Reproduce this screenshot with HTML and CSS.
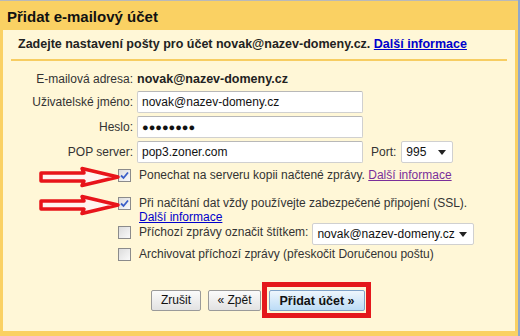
FILE: index.html
```html
<!DOCTYPE html>
<html lang="cs">

<head>
    <meta charset="UTF-8">
    <title>Přidat e-mailový účet</title>
    <link rel="stylesheet" href="styles.css">
</head>

<body>
    <div class="window">
        <div class="panel">
            <h1 class="title">Přidat e-mailový účet</h1>
            <div class="content">
                <p class="intro">Zadejte nastavení pošty pro účet novak@nazev-domeny.cz. <a href="#">Další informace</a></p>

                <div class="form">
                    <div class="row">
                        <span class="label">E-mailová adresa:</span>
                        <b class="address">novak@nazev-domeny.cz</b>
                    </div>
                    <div class="row">
                        <span class="label">Uživatelské jméno:</span>
                        <span class="input">novak@nazev-domeny.cz</span>
                    </div>
                    <div class="row">
                        <span class="label">Heslo:</span>
                        <span class="input dots">●●●●●●●●</span>
                    </div>
                    <div class="row">
                        <span class="label">POP server:</span>
                        <span class="input">pop3.zoner.com</span>
                        <span class="port-label">Port:</span>
                        <span class="select port">995<i class="caret"></i></span>
                    </div>
                </div>

                <div class="options">
                    <div class="opt opt-1">
                        <svg class="arrow" width="84" height="22" viewBox="0 0 84 22"><path d="M3 7 H46 L44 2.5 L80 11 L44 19.5 L46 15 H3 Z" fill="#fff4f0" stroke="#e8141a" stroke-width="3.5" stroke-linejoin="round"/></svg>
                        <span class="check"><svg width="9" height="9" viewBox="0 0 9 9"><path d="M1 4.5 L3.5 7 L8 1.5" fill="none" stroke="#3a5ec8" stroke-width="1.8"/></svg></span>
                        <span class="text">Ponechat na serveru kopii načtené zprávy. <a class="visited" href="#">Další informace</a></span>
                    </div>
                    <div class="opt opt-2">
                        <svg class="arrow" width="84" height="22" viewBox="0 0 84 22"><path d="M3 7 H46 L44 2.5 L80 11 L44 19.5 L46 15 H3 Z" fill="#fff4f0" stroke="#e8141a" stroke-width="3.5" stroke-linejoin="round"/></svg>
                        <span class="check"><svg width="9" height="9" viewBox="0 0 9 9"><path d="M1 4.5 L3.5 7 L8 1.5" fill="none" stroke="#3a5ec8" stroke-width="1.8"/></svg></span>
                        <span class="text">Při načítání dat vždy používejte zabezpečené připojení (SSL).<br><a href="#">Další informace</a></span>
                    </div>
                    <div class="opt opt-3">
                        <span class="check"></span>
                        <span class="text">Příchozí zprávy označit štítkem:</span>
                        <span class="select label-select">novak@nazev-domeny.cz<i class="caret"></i></span>
                    </div>
                    <div class="opt opt-4">
                        <span class="check"></span>
                        <span class="text">Archivovat příchozí zprávy (přeskočit Doručenou poštu)</span>
                    </div>
                </div>

                <div class="buttons">
                    <button class="cancel">Zrušit</button>
                    <button class="back">« Zpět</button>
                    <span class="highlight"><button class="primary">Přidat účet »</button></span>
                </div>
            </div>
        </div>
        <div class="edge"></div>
    </div>
</body>

</html>
```

FILE: styles.css
```css
/* základ */
* {
    margin: 0;
    padding: 0;
    box-sizing: border-box;
}

body {
    font-family: "Liberation Sans", Arial, sans-serif;
    font-size: 12px;
    color: #222;
    background: #fff;
}

a {
    color: #0000cc;
}

a.visited {
    color: #7a2f9a;
}

/* okno */
.window {
    width: 520px;
    height: 336px;
    display: flex;
}

.panel {
    flex: 1;
    display: flex;
    flex-direction: column;
    background: #fad163;
    border-top: 1px solid #b9b9b9;
}

.edge {
    width: 2px;
    background: #8fa8cc;
}

.title {
    height: 29px;
    padding: 7px 0 0 7px;
    font-size: 15px;
    font-weight: bold;
    color: #111;
}

.content {
    flex: 1;
    margin: 0 3px 5px 3px;
    background: #fff7d7;
}

.intro {
    margin: 0 8px;
    padding: 7px 0 7px 7px;
    line-height: 15px;
    border-bottom: 2px solid #f7cd62;
    font-size: 12.5px;
    font-weight: bold;
}

/* formulář */
.form {
    padding-top: 8px;
}

.row {
    display: flex;
    align-items: center;
    height: 25px;
}

.row:first-child {
    height: 20px;
}

.label {
    width: 130px;
    margin-right: 4px;
    text-align: right;
    color: #333;
}

.address {
    font-size: 12.5px;
}

.input {
    width: 226px;
    height: 22px;
    padding: 3px 4px;
    background: #fff;
    border: 1px solid #d0d0d0;
    border-top-color: #b8b8b8;
    border-radius: 2px;
    color: #111;
}

.dots {
    font-size: 11px;
    padding-top: 4px;
}

.port-label {
    margin: 0 5px 0 8px;
    color: #333;
}

.select {
    position: relative;
    height: 22px;
    padding: 3px 4px;
    background: #fff;
    border: 1px solid #d0d0d0;
    border-radius: 2px;
    color: #111;
}

.port {
    width: 52px;
}

.caret {
    position: absolute;
    right: 6px;
    top: 8px;
    border-left: 4px solid transparent;
    border-right: 4px solid transparent;
    border-top: 5px solid #222;
}

/* volby */
.options {
    padding-top: 4px;
}

.opt {
    display: flex;
    align-items: flex-start;
    min-height: 22px;
    padding-left: 115px;
    position: relative;
}

.opt-1 {
    height: 28px;
}

.opt-2 {
    height: 27px;
}

.opt-3 {
    height: 24px;
}

.check {
    width: 13px;
    height: 13px;
    margin: 1px 8px 0 0;
    flex-shrink: 0;
    display: flex;
    align-items: center;
    justify-content: center;
    border: 1px solid #8b8b8b;
    background: linear-gradient(135deg, #dcdcdc, #fafafa);
}

.text {
    line-height: 14px;
    color: #333;
}

.opt-3 .check {
    margin-top: 3px;
}

.opt-3 .text {
    margin-top: 2px;
}

.arrow {
    position: absolute;
    left: 35px;
    top: -2px;
}

.label-select {
    width: 162px;
    margin-left: 4px;
}

/* tlačítka */
.buttons {
    display: flex;
    align-items: center;
    justify-content: center;
    gap: 7px;
    padding: 13px 0 0 4px;
}

button {
    height: 21px;
    font-family: inherit;
    font-size: 12px;
    color: #111;
    white-space: nowrap;
    border: 1px solid #9a9a9a;
    border-radius: 2px;
    background: linear-gradient(#fbfbfb, #e2e2e2);
}

.cancel {
    width: 50px;
}

.back {
    width: 53px;
}

.highlight {
    display: inline-flex;
    border: 5px solid #e4181c;
    padding: 3px 1px 2px 2px;
    margin-left: -6px;
}

.primary {
    width: 96px;
    font-size: 12.5px;
    font-weight: bold;
    border-color: #7fa2c8;
    background: linear-gradient(#eef6fd, #bcdcf6);
}
```
